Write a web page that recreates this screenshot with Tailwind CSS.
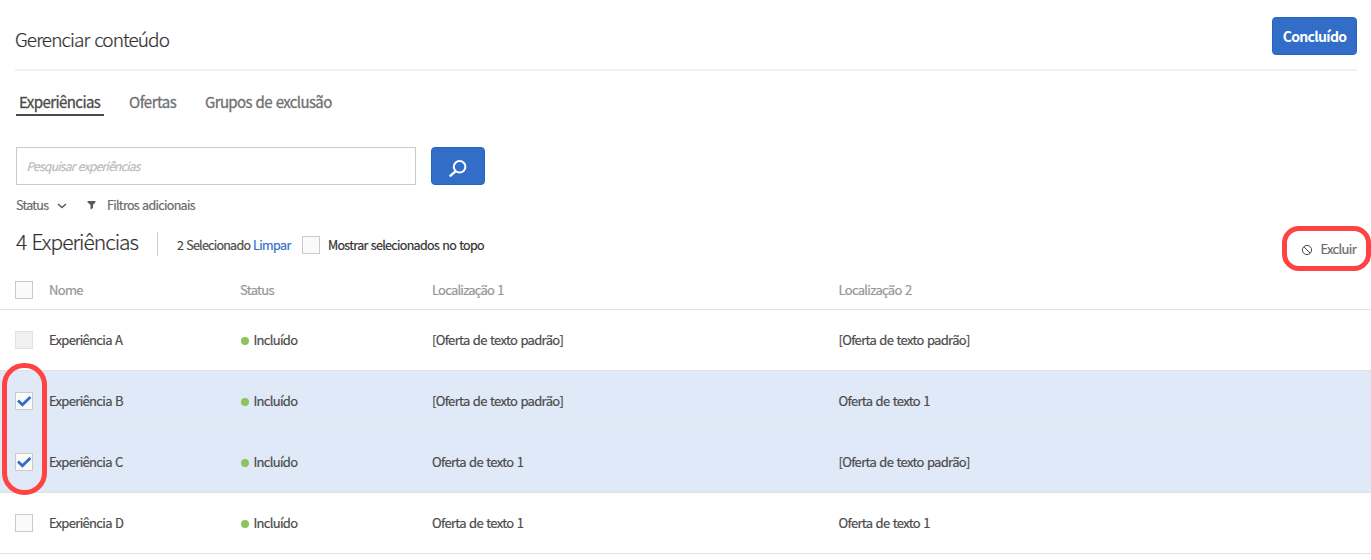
<!DOCTYPE html>
<html lang="pt-BR">
<head>
<meta charset="utf-8">
<title>Gerenciar conteúdo</title>
<script src="https://cdn.jsdelivr.net/npm/@tailwindcss/browser@4"></script>
</head>
<body class="relative h-[560px] w-[1371px] overflow-hidden bg-white font-['Noto_Sans_CJK_SC','Open_Sans',sans-serif] text-[13px] tracking-[-0.67px] text-[#4b4b4b] whitespace-nowrap [word-spacing:1px] [-webkit-text-stroke:0.2px]">
<header class="mr-[14px] ml-[15px] flex h-[71px] items-start justify-between border-b-2 border-[#f0f0f0]">
  <h1 class="mt-[27px] text-[19px] leading-6 font-light tracking-[-0.92px] text-[#323232] [word-spacing:1.5px]">Gerenciar conteúdo</h1>
  <button class="mt-[17px] h-[38px] w-[85px] rounded-[4px] border border-[#2566bd] bg-[#326ec8] text-[14px] font-bold tracking-[-0.66px] text-white [-webkit-text-stroke:0]">Concluído</button>
</header>
<nav class="ml-4 flex h-[45px] items-end text-[15px] leading-5 tracking-[-0.63px] text-[#707070] [-webkit-text-stroke:0.3px]">
  <a class="h-[24px] w-[88px] border-b-2 border-[#4b4b4b] pl-[3px] tracking-[-0.56px] text-[#4b4b4b]">Experiências</a>
  <a class="h-[24px] w-[101px] pl-[25px] tracking-[-0.5px]">Ofertas</a>
  <a class="h-[24px]">Grupos de exclusão</a>
</nav>
<div class="mt-[31px] ml-4 flex gap-[15px]">
  <div class="flex h-[38px] w-[400px] items-center border border-[#cacaca] pl-[9.5px] text-[12px] tracking-[-0.7px] text-[#b9b9b9] italic">Pesquisar experiências</div>
  <button class="flex h-[38px] w-[54px] items-center justify-center rounded-[4px] border border-[#2566bd] bg-[#326ec8]">
    <svg class="mt-[3px]" width="20" height="20" viewBox="0 0 20 20" fill="none" stroke="#fff" stroke-width="2"><circle cx="11.6" cy="8.8" r="5.8"/><path d="M7.8 13.2 1.7 18.4" stroke-width="2.4"/></svg>
  </button>
</div>
<div class="mt-[10px] ml-4 flex h-5 items-center text-[12.5px] tracking-[-0.68px] text-[#6a6a6a]">
  <span class="w-[41px]">Status</span>
  <svg width="10" height="8" viewBox="0 0 10 8" fill="none" stroke="#5b5b5b" stroke-width="1.6"><path d="m1 3 4 3.5L9 3"/></svg>
  <svg class="ml-5" width="9" height="10" viewBox="0 0 9 10" fill="#5b5b5b"><path d="M.5 1h8v1.3L6 5v3L3.5 9.5V5L.5 2.3z"/></svg>
  <span class="ml-[11px]">Filtros adicionais</span>
</div>
<div class="mr-[14px] ml-4 flex h-[55px] items-start text-[12.5px]">
  <h2 class="mt-3 w-[141px] text-[21px] leading-7 font-light tracking-[-1px] text-[#323232] [word-spacing:1.5px]">4 Experiências</h2>
  <i class="mt-[17px] h-6 w-px bg-[#cfcfcf]"></i>
  <span class="mt-5 ml-[19px] w-[76px] leading-5 tracking-[-0.75px]">2 Selecionado</span>
  <span class="mt-5 w-[49px] leading-5 tracking-[-0.6px] text-[#326ec8]">Limpar</span>
  <i class="mt-[21px] size-[18px] border border-[#cacaca] bg-[#fafafa]"></i>
  <span class="mt-5 ml-2 leading-5 tracking-[-0.68px] text-[#323232]">Mostrar selecionados no topo</span>
  <span class="mt-6 ml-auto flex items-center gap-2 leading-5 text-[#6a6a6a]"><svg width="12" height="12" viewBox="0 0 12 12" fill="none" stroke="#4b4b4b"><circle cx="6" cy="7" r="4.6"/><path d="m2.9 3.9 6.2 6.2"/></svg><span class="w-[36.5px] text-[13px]">Excluir</span></span>
</div>
<main>
  <div class="grid h-[40px] grid-cols-[49px_191px_192px_406.5px_1fr] items-center border-b border-[#e1e1e1] text-[#969696]">
    <i class="ml-[15px] size-[18px] border border-[#cacaca] bg-[#fafafa]"></i><span>Nome</span><span>Status</span><span class="tracking-[-0.78px]">Localização 1</span><span class="tracking-[-0.68px]">Localização 2</span>
  </div>
  <div class="grid h-[61px] grid-cols-[49px_191px_192px_406.5px_1fr] items-center border-b border-[#e1e1e1]">
    <i class="ml-[15px] size-[18px] border border-[#e1e1e1] bg-[#f0f0f0]"></i><span>Experiência A</span><span class="flex items-center gap-[4.5px] tracking-[-0.7px]"><i class="ml-px size-2 translate-y-px rounded-full bg-[#8cc35f]"></i>Incluído</span><span>[Oferta de texto padrão]</span><span>[Oferta de texto padrão]</span>
  </div>
  <div class="grid h-[61px] grid-cols-[49px_191px_192px_406.5px_1fr] items-center border-b border-[#e1e6ee] bg-[#dfe9f7]">
    <i class="ml-[15px] size-[18px] border border-[#cacaca] bg-[#fafafa]"><svg width="16" height="16" viewBox="0 0 16 16" fill="none" stroke="#326ec8" stroke-width="2.8"><path d="m2 7.6 4.4 4.2L14.4 4"/></svg></i><span>Experiência B</span><span class="flex items-center gap-[4.5px] tracking-[-0.7px]"><i class="ml-px size-2 translate-y-px rounded-full bg-[#8cc35f]"></i>Incluído</span><span>[Oferta de texto padrão]</span><span>Oferta de texto 1</span>
  </div>
  <div class="grid h-[61px] grid-cols-[49px_191px_192px_406.5px_1fr] items-center border-b border-[#e1e1e1] bg-[#dfe9f7]">
    <i class="ml-[15px] size-[18px] border border-[#cacaca] bg-[#fafafa]"><svg width="16" height="16" viewBox="0 0 16 16" fill="none" stroke="#326ec8" stroke-width="2.8"><path d="m2 7.6 4.4 4.2L14.4 4"/></svg></i><span>Experiência C</span><span class="flex items-center gap-[4.5px] tracking-[-0.7px]"><i class="ml-px size-2 translate-y-px rounded-full bg-[#8cc35f]"></i>Incluído</span><span>Oferta de texto 1</span><span>[Oferta de texto padrão]</span>
  </div>
  <div class="grid h-[61px] grid-cols-[49px_191px_192px_406.5px_1fr] items-center border-b border-[#e1e1e1]">
    <i class="ml-[15px] size-[18px] border border-[#cacaca] bg-[#fafafa]"></i><span>Experiência D</span><span class="flex items-center gap-[4.5px] tracking-[-0.7px]"><i class="ml-px size-2 translate-y-px rounded-full bg-[#8cc35f]"></i>Incluído</span><span>Oferta de texto 1</span><span>Oferta de texto 1</span>
  </div>
</main>
<div class="absolute top-[226px] left-[1282px] h-[45px] w-[89px] rounded-[17px] border-5 border-[#ff4343]"></div>
<div class="absolute top-[363px] left-[2px] h-[132px] w-[45px] rounded-[22px] border-5 border-[#ff4343]"></div>
</body>
</html>
